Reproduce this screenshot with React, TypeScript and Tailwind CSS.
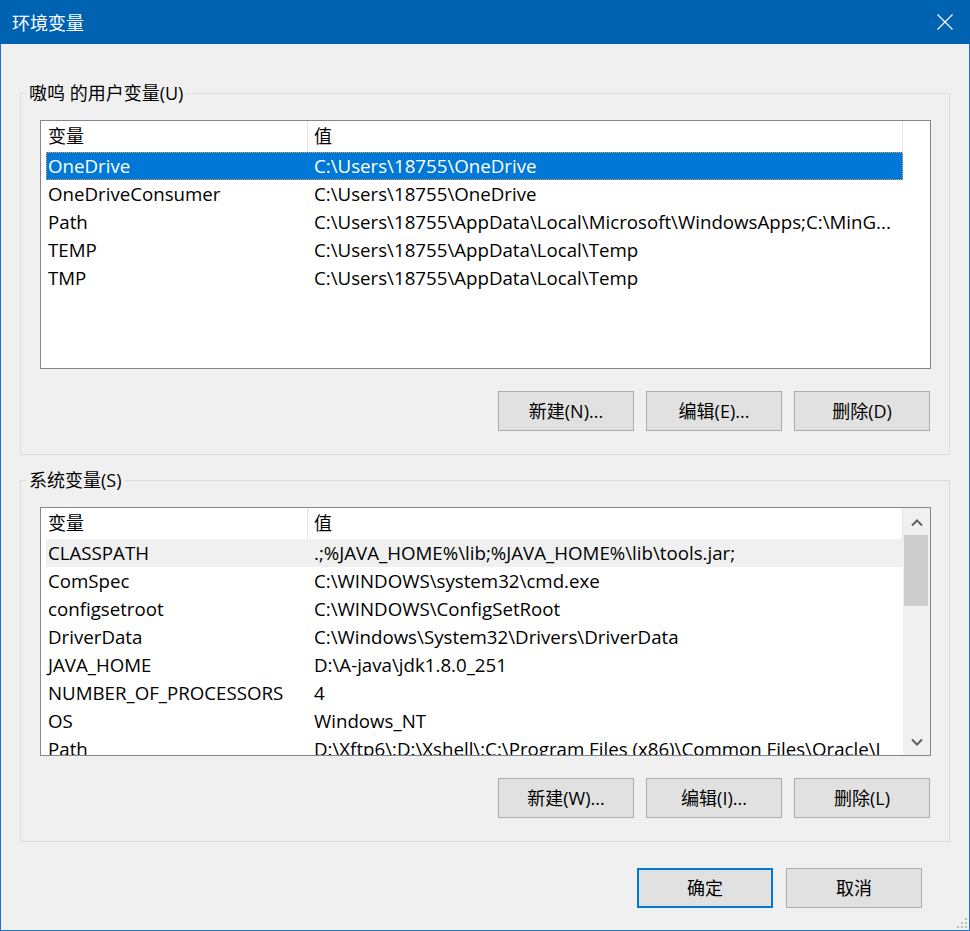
import type { ReactNode } from 'react';

type Row = { name: string; value: string };

const userVars: Row[] = [
  { name: 'OneDrive', value: 'C:\\Users\\18755\\OneDrive' },
  { name: 'OneDriveConsumer', value: 'C:\\Users\\18755\\OneDrive' },
  { name: 'Path', value: 'C:\\Users\\18755\\AppData\\Local\\Microsoft\\WindowsApps;C:\\MinG...' },
  { name: 'TEMP', value: 'C:\\Users\\18755\\AppData\\Local\\Temp' },
  { name: 'TMP', value: 'C:\\Users\\18755\\AppData\\Local\\Temp' },
];

const systemVars: Row[] = [
  { name: 'CLASSPATH', value: '.;%JAVA_HOME%\\lib;%JAVA_HOME%\\lib\\tools.jar;' },
  { name: 'ComSpec', value: 'C:\\WINDOWS\\system32\\cmd.exe' },
  { name: 'configsetroot', value: 'C:\\WINDOWS\\ConfigSetRoot' },
  { name: 'DriverData', value: 'C:\\Windows\\System32\\Drivers\\DriverData' },
  { name: 'JAVA_HOME', value: 'D:\\A-java\\jdk1.8.0_251' },
  { name: 'NUMBER_OF_PROCESSORS', value: '4' },
  { name: 'OS', value: 'Windows_NT' },
  { name: 'Path', value: 'D:\\Xftp6\\;D:\\Xshell\\;C:\\Program Files (x86)\\Common Files\\Oracle\\J' },
];

function Chevron({ down = false }: { down?: boolean }) {
  return (
    <svg width="12" height="8" viewBox="0 0 12 8">
      <path
        d={down ? 'M1 1.5 L6 6.5 L11 1.5' : 'M1 6.5 L6 1.5 L11 6.5'}
        stroke="#606060"
        strokeWidth="2"
        fill="none"
      />
    </svg>
  );
}

function Scrollbar() {
  return (
    <div className="w-[27px] shrink-0 bg-[#f0f0f0] flex flex-col">
      <div className="h-[27px] flex items-center justify-center pt-[3px]">
        <Chevron />
      </div>
      <div className="h-[71px] ml-[1px] w-[24px] bg-[#cdcdcd]" />
      <div className="flex-1" />
      <div className="h-[27px] flex items-center justify-center">
        <Chevron down />
      </div>
    </div>
  );
}

function ListView({
  rows,
  selected,
  hovered,
  scroll = false,
}: {
  rows: Row[];
  selected?: number;
  hovered?: number;
  scroll?: boolean;
}) {
  return (
    <div className="h-[249px] border border-[#828790] bg-white flex overflow-hidden text-[18.7px]">
      <div className="flex-1 min-w-0 pl-[5px]">
        {/* Header */}
        <div className="flex h-[31px] leading-[31px] text-[18px]">
          <div className="w-[262px] shrink-0 border-r border-[#e5e5e5] pl-[2px]">变量</div>
          <div className="w-[595px] shrink-0 border-r border-[#e5e5e5] pl-[6px]">值</div>
        </div>
        {rows.map((row, i) => {
          const isSel = selected === i;
          const isHover = hovered === i;
          return (
            <div
              key={row.name + i}
              className={`flex w-[857px] h-[28px] leading-[28px] ${
                isSel
                  ? 'bg-[#0078d7] text-white outline-1 outline-dotted outline-[#e9a352] -outline-offset-1'
                  : isHover
                    ? 'bg-[#f0f0f0]'
                    : ''
              }`}
            >
              <div className="w-[262px] shrink-0 pl-[2px] truncate">{row.name}</div>
              <div className="w-[595px] shrink-0 pl-[6px] pr-[10px] whitespace-nowrap overflow-hidden">
                {row.value}
              </div>
            </div>
          );
        })}
      </div>
      {scroll && <Scrollbar />}
    </div>
  );
}

function Button({ children, primary = false }: { children: ReactNode; primary?: boolean }) {
  return (
    <div
      className={`w-[136px] h-[40px] bg-[#e1e1e1] flex items-center justify-center ${
        primary ? 'border-2 border-[#0078d7]' : 'border border-[#adadad]'
      }`}
    >
      {children}
    </div>
  );
}

function Group({ label, children, className = '' }: { label: string; children: ReactNode; className?: string }) {
  return (
    <fieldset className={`border border-[#dcdcdc] ${className}`}>
      <legend className="ml-[5px] px-[3px] leading-[22px]">{label}</legend>
      <div className="pl-[19px] pr-[18px] pt-[16px] pb-[23px]">{children}</div>
    </fieldset>
  );
}

export default function App() {
  return (
    <div className="w-[970px] h-[931px] flex flex-col bg-[#f0f0f0] text-black text-[18px] font-['Open_Sans','Noto_Sans_CJK_SC',sans-serif]">
      {/* Title bar */}
      <div className="h-[44px] shrink-0 bg-[#0063b1] text-white flex items-center justify-between pl-[12px] pr-[17px]">
        <span className="font-['Noto_Sans_CJK_SC',sans-serif]">环境变量</span>
        <svg width="16" height="16" viewBox="0 0 16 16">
          <path d="M0.5 0.5 L15.5 15.5 M15.5 0.5 L0.5 15.5" stroke="#ffffff" strokeWidth="1.2" />
        </svg>
      </div>

      {/* Body */}
      <div className="relative flex-1 border-x border-b border-[#1e74c6] px-[19px]">
        <Group label="嗷呜 的用户变量(U)" className="mt-[38px]">
          <ListView rows={userVars} selected={0} />
          <div className="mt-[22px] flex justify-end gap-[12px] pr-[1px]">
            <Button>新建(N)...</Button>
            <Button>编辑(E)...</Button>
            <Button>删除(D)</Button>
          </div>
        </Group>

        <Group label="系统变量(S)" className="mt-[14px]">
          <ListView rows={systemVars} hovered={0} scroll />
          <div className="mt-[22px] flex justify-end gap-[12px] pr-[1px]">
            <Button>新建(W)...</Button>
            <Button>编辑(I)...</Button>
            <Button>删除(L)</Button>
          </div>
        </Group>

        <div className="mt-[26px] flex justify-end gap-[13px] pr-[28px]">
          <Button primary>确定</Button>
          <Button>取消</Button>
        </div>

        {/* Resize grip */}
        <svg className="absolute right-[1px] bottom-[1px]" width="13" height="13" viewBox="0 0 13 13">
          <rect x="10" y="2" width="2" height="2" fill="#bcbcbc" />
          <rect x="6" y="6" width="2" height="2" fill="#bcbcbc" />
          <rect x="10" y="6" width="2" height="2" fill="#bcbcbc" />
          <rect x="2" y="10" width="2" height="2" fill="#bcbcbc" />
          <rect x="6" y="10" width="2" height="2" fill="#bcbcbc" />
          <rect x="10" y="10" width="2" height="2" fill="#bcbcbc" />
        </svg>
      </div>
    </div>
  );
}
